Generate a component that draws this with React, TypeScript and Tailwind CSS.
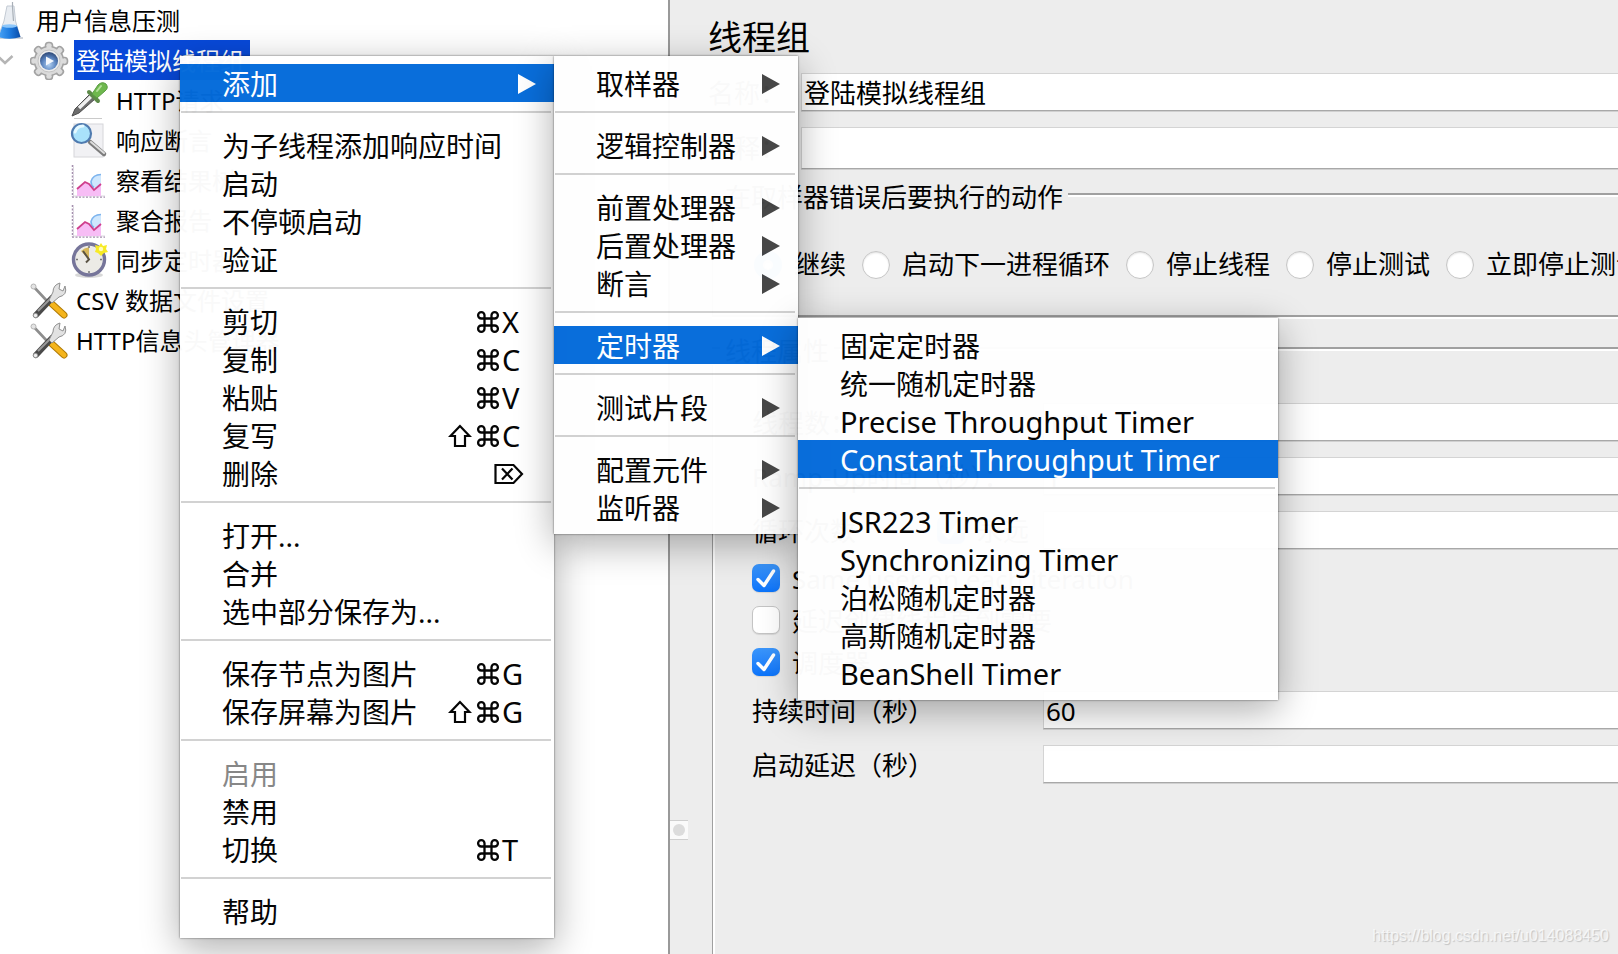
import { useState, type ReactNode } from "react";

/* ---------- tree icons ---------- */

function FlaskIcon() {
  return (
    <svg viewBox="0 0 40 40" className="size-10 shrink-0" aria-hidden="true">
      <defs>
        <linearGradient id="flask" x1="0" x2="1">
          <stop offset="0" stopColor="#4aa3f5" />
          <stop offset="0.5" stopColor="#1f7ce0" />
          <stop offset="1" stopColor="#0a4ca8" />
        </linearGradient>
      </defs>
      <path d="M6 38h27" stroke="#9aa3b0" strokeWidth="1.5" opacity=".6" />
      <path d="M17 6h7l1.500 15 4.500 16q-11 3-22 0l6-16z" fill="#e9edf2" stroke="#c4cbd4" />
      <path d="M22.500 2v5l1 14" stroke="#a9b0b8" strokeWidth="1.200" fill="none" />
      <path d="M12.500 26h14.500l3.500 11q-11 3.500-22 0z" fill="url(#flask)" />
      <ellipse cx="19.500" cy="26" rx="7.500" ry="1.800" fill="#8cc6fa" />
    </svg>
  );
}

function GearIcon() {
  const teeth = [0, 45, 90, 135, 180, 225, 270, 315];
  return (
    <svg viewBox="0 0 40 40" className="size-10 shrink-0" aria-hidden="true">
      <defs>
        <radialGradient id="gearHub" cx=".5" cy=".7" r=".65">
          <stop offset="0" stopColor="#b4d2f2" />
          <stop offset=".6" stopColor="#5a84bf" />
          <stop offset="1" stopColor="#34507f" />
        </radialGradient>
      </defs>
      <g fill="#d9d9d9" stroke="#a3a3a3" strokeWidth="1.600">
        {teeth.map((a) => (
          <rect key={a} x="15.500" y="2.500" width="7" height="9" rx="3" transform={`rotate(${a} 19 21)`} />
        ))}
        <circle cx="19" cy="21" r="14.500" />
      </g>
      <g fill="#dcdcdc">
        {teeth.map((a) => (
          <rect key={a} x="16.500" y="4" width="5" height="8" rx="2" transform={`rotate(${a} 19 21)`} />
        ))}
      </g>
      <circle cx="19" cy="21" r="11" fill="#ececec" stroke="#c4c4c4" />
      <circle cx="19" cy="21" r="9" fill="url(#gearHub)" />
      <path d="M16 16.500l8 4.500-8 4.500z" fill="#f4f8fd" />
    </svg>
  );
}

function DropperIcon() {
  return (
    <svg viewBox="0 0 40 40" className="size-10 shrink-0" aria-hidden="true">
      <path d="M4 38.500h28" stroke="#b5b5b5" opacity=".7" />
      <path d="M2 36l3-7L20 14l5 5L9 33z" fill="#6d6d6d" stroke="#4d4d4d" strokeLinejoin="round" />
      <path d="M9 28l12-11.500" stroke="#f0f0f0" strokeWidth="3.500" />
      <path d="M19 12l9 9" stroke="#5d8a49" strokeWidth="4" strokeLinecap="round" />
      <path d="M22 14l6-9q4-4 8-1 3 4-1 7l-8 7z" fill="#6fb84e" stroke="#5a9c43" />
      <path d="M27 11l4-5" stroke="#b5e29c" strokeWidth="2" strokeLinecap="round" />
    </svg>
  );
}

function MagnifierIcon() {
  return (
    <svg viewBox="0 0 40 40" className="size-10 shrink-0" aria-hidden="true">
      <rect x="4" y="4" width="29" height="33" fill="#f1f1f4" stroke="#d6d6da" />
      <path d="M20 22l14 12" stroke="#7d7d7d" strokeWidth="4.500" strokeLinecap="round" />
      <path d="M21 22l13 11" stroke="#dedede" strokeWidth="2" strokeLinecap="round" />
      <circle cx="11.500" cy="13.500" r="9.500" fill="#a9e2fb" stroke="#4f7bb0" strokeWidth="2.200" />
      <path d="M5 12q2-6 8-6" stroke="#e4f8ff" strokeWidth="3" fill="none" strokeLinecap="round" />
    </svg>
  );
}

function ChartIcon() {
  return (
    <svg viewBox="0 0 40 40" className="size-10 shrink-0" aria-hidden="true">
      <path d="M2.500 5v32M2 37h33" stroke="#a58fae" strokeWidth="1.500" strokeDasharray="2 1.500" fill="none" />
      <path d="M3.500 5v31H35" stroke="#dcd6e0" fill="none" />
      <path d="M31 14q-8 0-10 7-1 7 10 9z" fill="#cfe7fd" />
      <path d="M31 14.500q-8 0-10 7 0 4 3 6" stroke="#7db4ee" strokeWidth="1.600" fill="none" />
      <path d="M7 29l8-7 4 2 5 6 7-7v13H7z" fill="#f7bdf5" />
      <path d="M7 29l8-7 4 2 5 6 7-6" stroke="#cf3f8c" strokeWidth="1.800" fill="none" />
    </svg>
  );
}

function ClockIcon() {
  return (
    <svg viewBox="0 0 40 40" className="size-10 shrink-0" aria-hidden="true">
      <ellipse cx="19" cy="35" rx="14" ry="3" fill="#c8c8c8" opacity=".7" />
      <circle cx="19" cy="19.500" r="15.500" fill="#ecebe6" stroke="#76759a" strokeWidth="3.400" />
      <path d="M19 19.500L11 11q4-4 8-3.500z" fill="#d7b75a" />
      <path d="M13 11l6 8.500-3 3" stroke="#5a5344" strokeWidth="2" fill="none" />
      <path d="M19 6v2M19 31v2M6 19.500h2M30 19.500h2" stroke="#777" strokeWidth="1.500" />
      <path d="M31 3l2 3 4-1-1 4 2 3-4 1-3 3-3-3-3-1 1-3-1-4 4 1z" fill="#f7ea25" />
      <circle cx="31" cy="9" r="2.200" fill="#fffbb8" />
    </svg>
  );
}

function ToolsIcon() {
  return (
    <svg viewBox="0 0 40 40" className="size-10 shrink-0" aria-hidden="true">
      <path d="M3 6l14 15" stroke="#8d8d8d" strokeWidth="2.600" strokeLinecap="round" />
      <circle cx="3.500" cy="6.500" r="2.500" fill="#e4e4e4" stroke="#b5b5b5" />
      <path d="M22 24l12 11" stroke="#b07b06" strokeWidth="7" strokeLinecap="round" />
      <path d="M22 24l12 11" stroke="#f5b51c" strokeWidth="5" strokeLinecap="round" />
      <path d="M6 35L22 18" stroke="#4a4a4a" strokeWidth="6" strokeLinecap="round" />
      <path d="M8 31L22 17" stroke="#9a9a9a" strokeWidth="2" />
      <circle cx="5.500" cy="35.500" r="2.200" fill="#f1f1f1" stroke="#8b8b8b" />
      <path d="M19 20l4-8q0-7 7-9l-1 6 4 2 2-5q3 9-6 11l-7 6z" fill="#e2e2e2" stroke="#8f8f8f" />
    </svg>
  );
}

/* ---------- tree ---------- */

type Node = { label: string; depth: string; icon: ReactNode; open?: boolean; selected?: boolean };

const nodes: Node[] = [
  { label: "用户信息压测", depth: "-ml-[10px]", icon: <FlaskIcon /> },
  { label: "登陆模拟线程组", depth: "ml-0", icon: <GearIcon />, open: true, selected: true },
  { label: "HTTP请求", depth: "ml-[70px]", icon: <DropperIcon /> },
  { label: "响应断言", depth: "ml-[70px]", icon: <MagnifierIcon /> },
  { label: "察看结果树", depth: "ml-[70px]", icon: <ChartIcon /> },
  { label: "聚合报告", depth: "ml-[70px]", icon: <ChartIcon /> },
  { label: "同步定时器", depth: "ml-[70px]", icon: <ClockIcon /> },
  { label: "CSV 数据文件设置", depth: "ml-[30px]", icon: <ToolsIcon /> },
  { label: "HTTP信息头管理器", depth: "ml-[30px]", icon: <ToolsIcon /> },
];

function Tree() {
  return (
    <ul role="tree" className="text-2xl">
      {nodes.map((n) => (
        <li key={n.label} role="treeitem" aria-selected={!!n.selected} className={`flex h-10 items-center ${n.depth}`}>
          {n.open && (
            <span className="w-[30px] shrink-0">
              <svg viewBox="0 0 18 10" className="-ml-1 h-[10px] w-[18px]" aria-hidden="true">
                <path d="M1.500 1l7.500 7 7.500-7" fill="none" stroke="#b5b5b5" strokeWidth="2.500" />
              </svg>
            </span>
          )}
          {n.icon}
          <span
            className={
              n.selected
                ? "ml-1 h-10 bg-[#0849d9] pr-[6px] pl-[2px] leading-[42px] whitespace-nowrap text-white"
                : "ml-1 h-10 pl-[2px] leading-[42px] whitespace-nowrap"
            }
          >
            {n.label}
          </span>
        </li>
      ))}
    </ul>
  );
}

/* ---------- menus ---------- */

type Item = { label: string; keys?: string; sub?: boolean; active?: boolean; disabled?: boolean };

const mainMenu: Item[][] = [
  [{ label: "添加", sub: true, active: true }],
  [{ label: "为子线程添加响应时间" }, { label: "启动" }, { label: "不停顿启动" }, { label: "验证" }],
  [
    { label: "剪切", keys: "⌘X" },
    { label: "复制", keys: "⌘C" },
    { label: "粘贴", keys: "⌘V" },
    { label: "复写", keys: "⇧⌘C" },
    { label: "删除", keys: "⌦" },
  ],
  [{ label: "打开..." }, { label: "合并" }, { label: "选中部分保存为..." }],
  [
    { label: "保存节点为图片", keys: "⌘G" },
    { label: "保存屏幕为图片", keys: "⇧⌘G" },
  ],
  [{ label: "启用", disabled: true }, { label: "禁用" }, { label: "切换", keys: "⌘T" }],
  [{ label: "帮助" }],
];

const addMenu: Item[][] = [
  [{ label: "取样器", sub: true }],
  [{ label: "逻辑控制器", sub: true }],
  [
    { label: "前置处理器", sub: true },
    { label: "后置处理器", sub: true },
    { label: "断言", sub: true },
  ],
  [{ label: "定时器", sub: true, active: true }],
  [{ label: "测试片段", sub: true }],
  [
    { label: "配置元件", sub: true },
    { label: "监听器", sub: true },
  ],
];

const timerMenu: Item[][] = [
  [
    { label: "固定定时器" },
    { label: "统一随机定时器" },
    { label: "Precise Throughput Timer" },
    { label: "Constant Throughput Timer", active: true },
  ],
  [
    { label: "JSR223 Timer" },
    { label: "Synchronizing Timer" },
    { label: "泊松随机定时器" },
    { label: "高斯随机定时器" },
    { label: "BeanShell Timer" },
  ],
];

function Keys({ keys }: { keys: string }) {
  if (keys === "⌦") {
    return (
      <svg viewBox="0 0 30 22" className="mr-3 h-[22px] w-[30px]" role="img" aria-label="Delete">
        <path d="M1.500 2h18l8.500 9-8.500 9h-18z" fill="none" stroke="currentColor" strokeWidth="2.200" />
        <path d="M8 5.500l10.500 11M18.500 5.500L8 16.500" stroke="currentColor" strokeWidth="2.200" />
      </svg>
    );
  }
  const chars = Array.from(keys);
  return (
    <span className="mr-[14px] flex items-center text-[29px]">
      {chars.map((c) =>
        c === "⌘" ? (
          <svg key={c} viewBox="0 0 24 24" className="mr-[2px] size-6" role="img" aria-label="Command">
            <path
              d="M8.500 8.500v7h7v-7zM8.500 8.500H5.300A3.200 3.200 0 1 1 8.500 5.300zM15.500 8.500V5.300a3.200 3.200 0 1 1 3.200 3.200zM15.500 15.500h3.200a3.200 3.200 0 1 1-3.200 3.200zM8.500 15.500v3.200a3.200 3.200 0 1 1-3.200-3.200z"
              fill="none"
              stroke="currentColor"
              strokeWidth="2.300"
            />
          </svg>
        ) : c === "⇧" ? (
          <svg key={c} viewBox="0 0 24 24" className="mr-1 size-6" role="img" aria-label="Shift">
            <path d="M12 2L2.500 12H7v10h10V12h4.500z" fill="none" stroke="currentColor" strokeWidth="2.200" />
          </svg>
        ) : (
          <span key={c} className="w-5">
            {c}
          </span>
        ),
      )}
    </span>
  );
}

function Menu({ label, groups, place }: { label: string; groups: Item[][]; place: string }) {
  return (
    <div
      role="menu"
      aria-label={label}
      className={`absolute bg-white py-2 text-[28px] opacity-[0.975] shadow-[0_0_2px_rgba(0,0,0,0.6),0_10px_36px_rgba(0,0,0,0.33)] ${place}`}
    >
      {groups.map((items, g) => (
        <div key={g} role="group">
          {g > 0 && <hr className="mt-[9px] mr-[3px] mb-[13px] ml-px h-[2px] border-0 bg-[#d1d1d1]" />}
          {items.map((it) => (
            <button
              key={it.label}
              type="button"
              role="menuitem"
              disabled={it.disabled}
              className={
                it.active
                  ? "flex h-[38px] w-full items-center justify-between bg-[#046bdb] pt-[2px] pr-[18px] pl-[42px] text-left leading-9 whitespace-nowrap text-white"
                  : it.disabled
                    ? "flex h-[38px] w-full items-center justify-between pt-[2px] pr-[18px] pl-[42px] text-left leading-9 whitespace-nowrap text-[#858585]"
                    : "flex h-[38px] w-full items-center justify-between pt-[2px] pr-[18px] pl-[42px] text-left leading-9 whitespace-nowrap text-black"
              }
            >
              <span className={it.label.endsWith("Timer") ? "text-[29px]" : "text-[28px]"}>{it.label}</span>
              {it.keys && <Keys keys={it.keys} />}
              {it.sub && (
                <svg
                  viewBox="0 0 18 20"
                  className={it.active ? "h-5 w-[18px] text-white" : "h-5 w-[18px] text-[#444]"}
                  aria-hidden="true"
                >
                  <path d="M0 0l18 10L0 20z" fill="currentColor" />
                </svg>
              )}
            </button>
          ))}
        </div>
      ))}
    </div>
  );
}

/* ---------- form ---------- */

const field =
  "min-w-0 flex-1 border-t border-l border-[#d4d4d4] border-b border-b-[#a8a8a8] bg-white pt-[2px] pl-[2px] text-[26px] shadow-[0_1px_0_#d0d0d0] outline-none";

function GroupTitle({ children }: { children: ReactNode }) {
  return (
    <div className="flex h-8 items-center">
      <div className="h-1 w-2 border-t-2 border-[#a0a0a0] bg-white" />
      <h2 className="px-[5px] pt-[3px] leading-8 whitespace-nowrap">{children}</h2>
      <div className="h-1 flex-1 border-t-2 border-[#a0a0a0] bg-white" />
    </div>
  );
}

function CheckBox({ id, checked, label }: { id: string; checked: boolean; label: string }) {
  const [on, setOn] = useState(checked);
  return (
    <div className="flex h-7 items-center">
      <span className="grid size-7 shrink-0">
        <input
          id={id}
          type="checkbox"
          checked={on}
          onChange={() => setOn(!on)}
          className="col-start-1 row-start-1 size-7 appearance-none rounded-[7px] border border-[#c4c4c4] bg-white shadow-[0_1px_1px_rgba(0,0,0,0.1)] checked:border-0 checked:bg-linear-to-b checked:from-[#3b96fb] checked:to-[#0a74fb]"
        />
        {on && (
          <svg viewBox="0 0 28 28" className="pointer-events-none col-start-1 row-start-1 size-7" aria-hidden="true">
            <path
              d="M6 15.500l6 6L21.500 7"
              fill="none"
              stroke="#fff"
              strokeWidth="3.400"
              strokeLinecap="round"
              strokeLinejoin="round"
            />
          </svg>
        )}
      </span>
      <label htmlFor={id} className="ml-[12px] pt-[2px] leading-7 whitespace-nowrap">
        {label}
      </label>
    </div>
  );
}

const actions = ["继续", "启动下一进程循环", "停止线程", "停止测试", "立即停止测试"];

function ThreadGroupForm() {
  const [action, setAction] = useState("继续");
  return (
    <main className="flex min-w-0 flex-1 flex-col text-[26px]">
      <h1 className="ml-5 h-[73px] text-[34px] leading-[75px]">线程组</h1>
      <div className="ml-5 flex h-[38px]">
        <label htmlFor="name" className="w-[93px] leading-10">
          名称：
        </label>
        <input id="name" defaultValue="登陆模拟线程组" className={field} />
      </div>
      <div className="mt-4 ml-5 flex h-[42px]">
        <label htmlFor="comment" className="w-[93px] leading-[42px]">
          注释：
        </label>
        <input id="comment" className={field} />
      </div>

      <section className="mt-[10px] ml-6">
        <GroupTitle>在取样器错误后要执行的动作</GroupTitle>
        <div
          role="radiogroup"
          aria-label="在取样器错误后要执行的动作"
          className="flex h-[106px] items-center gap-4 border-b-2 border-l border-[#a0a0a0] pt-[3px] pl-[41px] shadow-[0_2px_0_#fff]"
        >
          {actions.map((a) => (
            <label key={a} className="flex shrink-0 items-center gap-3 whitespace-nowrap">
              <input
                type="radio"
                name="action"
                checked={action === a}
                onChange={() => setAction(a)}
                className="size-7 appearance-none rounded-full border border-[#c6c6c6] bg-white shadow-[inset_0_1px_2px_rgba(0,0,0,0.12)] checked:border-[9px] checked:border-[#1f82fb]"
              />
              {a}
            </label>
          ))}
        </div>
      </section>

      <section className="mt-4 ml-6 flex flex-1 flex-col">
        <GroupTitle>线程属性</GroupTitle>
        <div className="flex flex-1 flex-col border-l border-[#a0a0a0] pt-[38px] pl-[39px] shadow-[inset_2px_0_0_#fff]">
          <div className="flex h-[38px]">
            <label htmlFor="threads" className="w-[291px] leading-10">
              线程数：
            </label>
            <input id="threads" defaultValue="100" className={field} />
          </div>
          <div className="mt-4 flex h-[38px]">
            <label htmlFor="ramp" className="w-[291px] leading-10">
              Ramp-Up时间（秒）：
            </label>
            <input id="ramp" defaultValue="1" className={field} />
          </div>
          <div className="mt-4 flex h-[38px] items-stretch">
            <label htmlFor="loops" className="w-[185px] leading-10">
              循环次数
            </label>
            <div className="flex w-[106px] items-center">
              <CheckBox id="forever" checked label="永远" />
            </div>
            <input id="loops" className={field} />
          </div>
          <div className="my-[15px] flex flex-col gap-[14px]">
            <CheckBox id="same" checked label="Same user on each iteration" />
            <CheckBox id="delay" checked={false} label="延迟创建线程直到需要" />
            <CheckBox id="scheduler" checked label="调度器" />
          </div>
          <div className="flex h-[38px]">
            <label htmlFor="duration" className="w-[291px] leading-10">
              持续时间（秒）
            </label>
            <input id="duration" defaultValue="60" className={field} />
          </div>
          <div className="mt-4 flex h-[38px]">
            <label htmlFor="startup" className="w-[291px] leading-10">
              启动延迟（秒）
            </label>
            <input id="startup" className={field} />
          </div>
        </div>
      </section>
    </main>
  );
}

export default function App() {
  return (
    <div className="relative flex min-h-screen overflow-hidden bg-[#ededed] font-['Noto_Sans','Noto_Sans_CJK_SC',sans-serif] text-black">
      <aside className="w-[670px] shrink-0 border-r-2 border-[#999] bg-white">
        <Tree />
      </aside>
      <div className="w-[18px] shrink-0">
        <div className="mt-[820px] flex h-5 items-center justify-center border-y border-[#cfcfcf] bg-[#fafafa]">
          <div className="size-3 rounded-full bg-[#dcdcdc]" />
        </div>
      </div>
      <ThreadGroupForm />

      <Menu label="线程组" groups={mainMenu} place="top-14 left-[180px] w-[374px]" />
      <Menu label="添加" groups={addMenu} place="top-14 left-[554px] w-[244px]" />
      <Menu label="定时器" groups={timerMenu} place="top-[318px] left-[798px] w-[480px]" />

      <p className="absolute right-[9px] bottom-[6px] font-['Liberation_Sans',sans-serif] text-base text-white/70 [text-shadow:1px_1px_1px_rgba(0,0,0,0.18)]">
        https://blog.csdn.net/u014088450
      </p>
    </div>
  );
}
